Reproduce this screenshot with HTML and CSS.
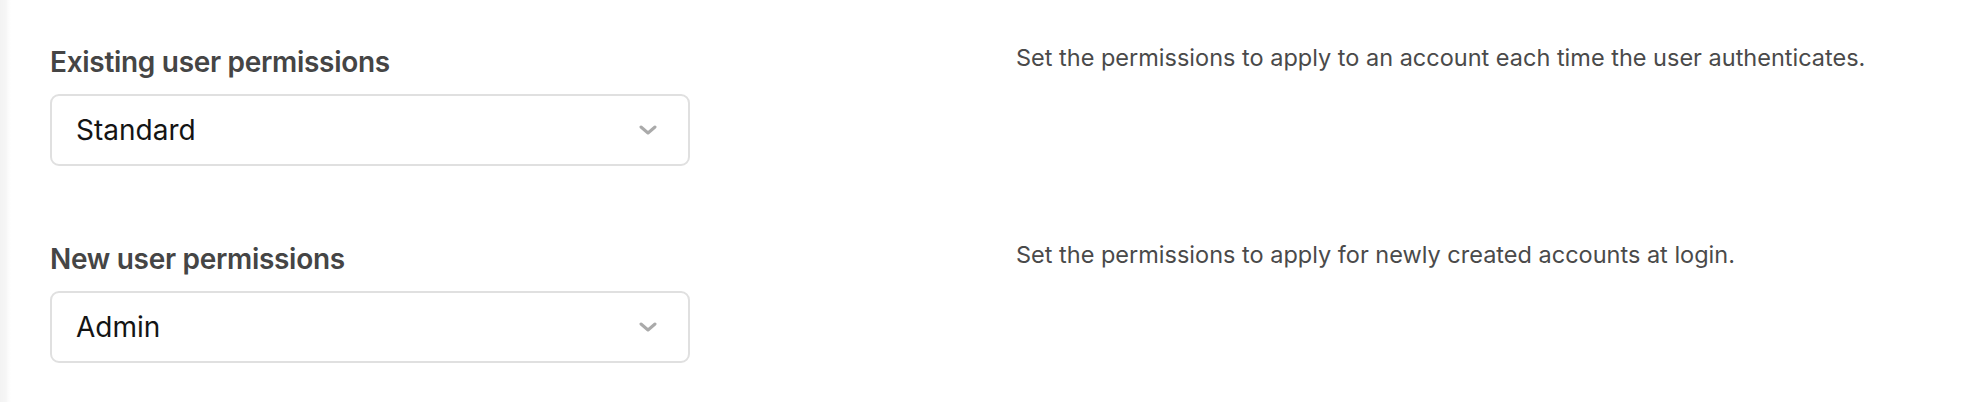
FILE: index.html
```html
<!DOCTYPE html>
<html lang="en">
<head>
<meta charset="utf-8">
<title>User permissions</title>
<link rel="stylesheet" href="styles.css">
</head>
<body>
<main class="settings">
  <section class="row">
    <div class="field">
      <label class="field-label">Existing user permissions</label>
      <div class="select">
        <span class="select-value">Standard</span>
        <svg class="chevron" width="18" height="10" viewBox="0 0 18 10" aria-hidden="true"><polyline points="2,2 9,8 16,2" fill="none" stroke="#aaaaaa" stroke-width="3" stroke-linecap="round" stroke-linejoin="round"/></svg>
      </div>
    </div>
    <p class="help">Set the permissions to apply to an account each time the user authenticates.</p>
  </section>
  <section class="row">
    <div class="field">
      <label class="field-label">New user permissions</label>
      <div class="select">
        <span class="select-value">Admin</span>
        <svg class="chevron" width="18" height="10" viewBox="0 0 18 10" aria-hidden="true"><polyline points="2,2 9,8 16,2" fill="none" stroke="#aaaaaa" stroke-width="3" stroke-linecap="round" stroke-linejoin="round"/></svg>
      </div>
    </div>
    <p class="help">Set the permissions to apply for newly created accounts at login.</p>
  </section>
</main>
</body>
</html>
```
FILE: styles.css
```css
html, body {
  margin: 0;
  padding: 0;
}
body {
  width: 1966px;
  height: 402px;
  overflow: hidden;
  background: linear-gradient(to right, #f3f3f3 0, #f6f6f6 6px, #fbfbfb 8px, #ffffff 11px);
  font-family: Inter, "Noto Sans", sans-serif;
}
.settings {
  display: flex;
  flex-direction: column;
  gap: 72px;
  padding: 41px 50px 0 50px;
}
.row {
  display: grid;
  grid-template-columns: 900px 1fr;
  column-gap: 66px;
  align-items: start;
}
.field {
  display: flex;
  flex-direction: column;
  gap: 11px;
}
.field-label {
  font-size: 28px;
  line-height: 42px;
  font-weight: 600;
  color: #454545;
  letter-spacing: -0.3px;
}
.select {
  box-sizing: border-box;
  width: 640px;
  height: 72px;
  border: 2px solid #e0e0e0;
  border-radius: 9px;
  background: #fff;
  display: flex;
  align-items: center;
  justify-content: space-between;
  padding: 0 31px 0 24px;
}
.select-value {
  font-size: 28px;
  color: #141414;
}
.chevron {
  display: block;
}
.help {
  margin: 1px 0 0 0;
  font-size: 23.5px;
  line-height: 32px;
  color: #4a4a4a;
}
```
